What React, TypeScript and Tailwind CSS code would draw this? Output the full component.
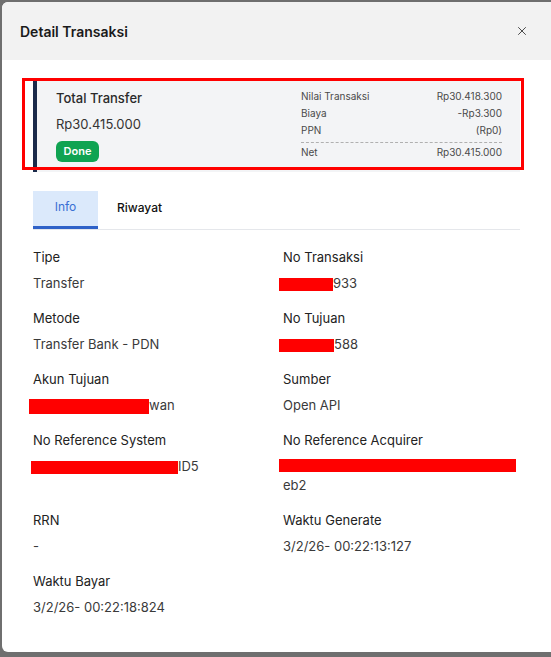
import { X } from "lucide-react";

type Field = {
  label: string;
  value: React.ReactNode;
};

function Redact({ w, h = 13, className = "" }: { w: number; h?: number; className?: string }) {
  return (
    <span
      className={`inline-block bg-[#ff0000] align-middle ${className}`}
      style={{ width: w, height: h }}
    />
  );
}

const rows: [Field, Field | null][] = [
  [
    { label: "Tipe", value: "Transfer" },
    {
      label: "No Transaksi",
      value: (
        <>
          <Redact w={54} className="-ml-1" />
          933
        </>
      ),
    },
  ],
  [
    { label: "Metode", value: "Transfer Bank - PDN" },
    {
      label: "No Tujuan",
      value: (
        <>
          <Redact w={55} className="-ml-1" />
          588
        </>
      ),
    },
  ],
  [
    {
      label: "Akun Tujuan",
      value: (
        <>
          <Redact w={120} h={15} className="-ml-1" />
          wan
        </>
      ),
    },
    { label: "Sumber", value: "Open API" },
  ],
  [
    {
      label: "No Reference System",
      value: (
        <>
          <Redact w={147} className="-ml-[2px]" />
          ID5
        </>
      ),
    },
    {
      label: "No Reference Acquirer",
      value: (
        <>
          <span className="flex h-[19px] items-center">
            <Redact w={237} className="-ml-1" />
          </span>
          <span className="block">eb2</span>
        </>
      ),
    },
  ],
  [
    { label: "RRN", value: "-" },
    { label: "Waktu Generate", value: "3/2/26- 00:22:13:127" },
  ],
  [{ label: "Waktu Bayar", value: "3/2/26- 00:22:18:824" }, null],
];

function FieldBlock({ f }: { f: Field }) {
  return (
    <div>
      <p className="text-[13px] leading-5 text-[#222]">{f.label}</p>
      <div className="mt-[6px] text-[13px] leading-5 text-[#3a3a3a]">{f.value}</div>
    </div>
  );
}

export default function App() {
  return (
    <div
      className="flex h-[657px] w-[551px] bg-[#6f6f6f] pb-[5px] pl-[2px] pt-[2px]"
      style={{ fontFamily: "Inter, 'Noto Sans', sans-serif" }}
    >
      <div className="relative flex flex-1 flex-col overflow-hidden rounded-tl-[6px] rounded-bl-[6px] bg-white">
        {/* header */}
        <div className="flex h-[58px] items-center justify-between bg-[#f2f2f2] pl-[18px] pr-[22px]">
          <h1 className="text-[14px] font-semibold text-[#1a1a1a]">Detail Transaksi</h1>
          <X size={14} strokeWidth={1.5} className="text-[#333]" />
        </div>

        <div className="px-[31px] pt-[21px]">
          {/* summary card */}
          <div className="relative flex h-[91px] bg-[#f3f4f6]">
            <div className="w-[4px] bg-[#1b2a4a]" />
            <div className="flex flex-1 justify-between pl-[19px] pr-[18px]">
              <div className="pt-[7px]">
                <p className="text-[13px] font-medium leading-5 text-[#2a2a2a]">Total Transfer</p>
                <p className="mt-[6px] text-[13px] leading-5 text-[#333]">Rp30.415.000</p>
                <span className="mt-[7px] inline-flex h-[21px] w-[43px] items-center justify-center rounded-[6px] bg-[#10a352] text-[11px] font-semibold text-white">
                  Done
                </span>
              </div>
              <div className="w-[201px] pt-[7px] text-[10px] text-[#4a4a4a]">
                <div className="flex h-[17px] items-center justify-between">
                  <span>Nilai Transaksi</span>
                  <span>Rp30.418.300</span>
                </div>
                <div className="flex h-[17px] items-center justify-between">
                  <span>Biaya</span>
                  <span>-Rp3.300</span>
                </div>
                <div className="flex h-[17px] items-center justify-between">
                  <span>PPN</span>
                  <span>(Rp0)</span>
                </div>
                <div className="mt-[3px] border-t border-dashed border-[#b0b0b0]" />
                <div className="flex h-[18px] items-center justify-between">
                  <span>Net</span>
                  <span>Rp30.415.000</span>
                </div>
              </div>
            </div>
            <div className="pointer-events-none absolute -left-[11px] -right-[4px] -top-[3px] bottom-[2px] border-[3px] border-[#ff0000]" />
          </div>

          {/* tabs */}
          <div className="mt-[19px] flex border-b border-[#e5e7eb]">
            <div className="-mb-px flex h-[38px] w-[65px] items-center justify-center border-b-[3px] border-[#2f62c8] bg-[#dbe9fb] pb-[3px] text-[12px] text-[#3a6fd3]">
              Info
            </div>
            <div className="flex h-[38px] items-center px-[19px] pb-[4px] text-[12px] font-medium text-[#111]">
              Riwayat
            </div>
          </div>

          {/* fields */}
          <div className="mt-[17px] flex flex-col gap-[15px]">
            {rows.map(([a, b], i) => (
              <div key={i} className="grid grid-cols-[250px_1fr]">
                <FieldBlock f={a} />
                {b ? <FieldBlock f={b} /> : <div />}
              </div>
            ))}
          </div>
        </div>
      </div>
    </div>
  );
}
